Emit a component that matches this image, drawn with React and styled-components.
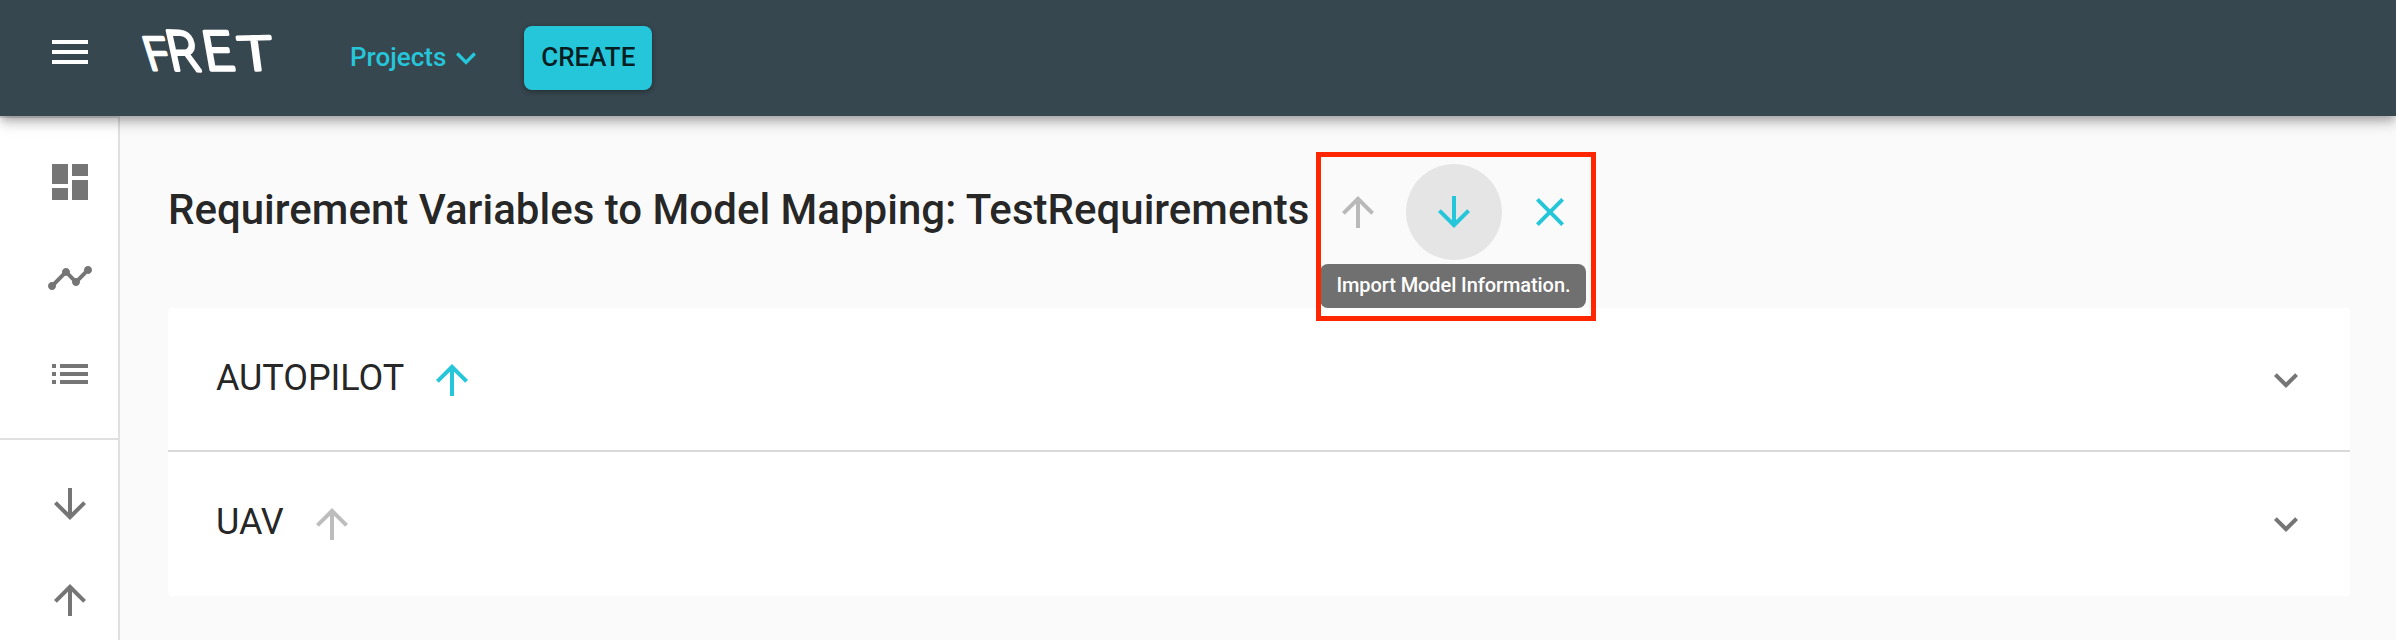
import React from 'react';
import styled, { createGlobalStyle } from 'styled-components';

const GlobalStyle = createGlobalStyle`
  *, *::before, *::after { box-sizing: border-box; }
  body {
    margin: 0;
    background: #fafafa;
    color: rgba(0, 0, 0, 0.87);
    font-family: Roboto, "Liberation Sans", sans-serif;
    overflow: hidden;
  }
`;

const colors = {
  bar: '#37474f',
  accent: '#26c6da',
  icon: '#757575',
  disabled: 'rgba(0, 0, 0, 0.26)',
  divider: '#e0e0e0',
};

const paths = {
  menu: 'M3 18h18v-2H3v2zm0-5h18v-2H3v2zm0-7v2h18V6H3z',
  dashboard: 'M3 13h8V3H3v10zm0 8h8v-6H3v6zm10 0h8V11h-8v10zm0-18v6h8V3h-8z',
  timeline:
    'M23 8c0 1.1-.9 2-2 2-.18 0-.35-.02-.51-.07l-3.56 3.55c.05.16.07.34.07.52 0 1.1-.9 2-2 2s-2-.9-2-2c0-.18.02-.36.07-.52l-2.55-2.55c-.16.05-.34.07-.52.07s-.36-.02-.52-.07l-4.55 4.56c.05.16.07.33.07.51 0 1.1-.9 2-2 2s-2-.9-2-2 .9-2 2-2c.18 0 .35.02.51.07l4.56-4.55C8.02 9.36 8 9.18 8 9c0-1.1.9-2 2-2s2 .9 2 2c0 .18-.02.36-.07.52l2.55 2.55c.16-.05.34-.07.52-.07s.36.02.52.07l3.55-3.56C19.02 8.35 19 8.18 19 8c0-1.1.9-2 2-2s2 .9 2 2z',
  list: 'M3 13h2v-2H3v2zm0 4h2v-2H3v2zm0-8h2V7H3v2zm4 4h14v-2H7v2zm0 4h14v-2H7v2zM7 7v2h14V7H7z',
  down: 'M20 12l-1.41-1.41L13 16.17V4h-2v12.17l-5.58-5.59L4 12l8 8 8-8z',
  up: 'M4 12l1.41 1.41L11 7.83V20h2V7.83l5.58 5.59L20 12l-8-8-8 8z',
  close: 'M19 6.41L17.59 5 12 10.59 6.41 5 5 6.41 10.59 12 5 17.59 6.41 19 12 13.41 17.59 19 19 17.59 13.41 12z',
  expand: 'M16.59 8.59L12 13.17 7.41 8.59 6 10l6 6 6-6z',
};

const Svg = styled.svg`
  display: block;
  flex: none;
  fill: currentColor;
  width: ${(p) => p.$size}px;
  height: ${(p) => p.$size}px;
`;

const Icon = ({ name, size = 48 }) => (
  <Svg viewBox="0 0 24 24" $size={size} aria-hidden="true">
    <path d={paths[name]} />
  </Svg>
);

const Page = styled.div`
  display: flex;
  flex-direction: column;
  height: 640px;
`;

const AppBar = styled.header`
  position: relative;
  z-index: 2;
  flex: none;
  display: flex;
  align-items: center;
  height: 116px;
  padding-left: 46px;
  background: ${colors.bar};
  box-shadow: 0 4px 8px -2px rgba(0, 0, 0, 0.2), 0 8px 10px 0 rgba(0, 0, 0, 0.14),
    0 2px 20px 0 rgba(0, 0, 0, 0.12);
`;

const MenuButton = styled.button`
  padding: 0 0 12px;
  border: 0;
  background: none;
  color: #fff;
`;

const Logo = styled.svg`
  width: 144px;
  height: 52px;
  margin: 0 72px 16px 40px;
  overflow: visible;
  fill: #fff;
  stroke: #fff;
  stroke-width: 3.2px;
  stroke-linejoin: round;
  font: 300 48px Roboto, sans-serif;
`;

const ProjectsButton = styled.button`
  display: flex;
  align-items: center;
  margin-right: 38px;
  padding: 0;
  border: 0;
  background: none;
  color: ${colors.accent};
  font: 500 26px/48px Roboto, sans-serif;
`;

const ButtonText = styled.span`
  padding-bottom: 2px;
`;

const CreateButton = styled.button`
  display: flex;
  align-items: center;
  justify-content: center;
  width: 128px;
  height: 64px;
  padding: 0;
  border: 0;
  border-radius: 8px;
  background: ${colors.accent};
  color: rgba(0, 0, 0, 0.87);
  font: 500 26px/48px Roboto, sans-serif;
  box-shadow: 0 2px 4px rgba(0, 0, 0, 0.22), 0 1px 6px rgba(0, 0, 0, 0.18);
`;

const Body = styled.div`
  flex: 1;
  display: flex;
  min-height: 0;
`;

const Sidebar = styled.nav`
  flex: none;
  width: 120px;
  border-right: 2px solid ${colors.divider};
  background: #fff;
  color: ${colors.icon};
  overflow: hidden;
`;

const NavGroup = styled.div`
  padding: 16px 0;
  border-top: 2px solid ${colors.divider};
`;

const NavItem = styled.div`
  display: flex;
  align-items: center;
  height: 96px;
  padding-left: 46px;
`;

const Main = styled.main`
  flex: 1;
  min-width: 0;
  padding: 48px 46px 0 48px;
`;

const TitleRow = styled.div`
  display: flex;
  align-items: center;
  height: 96px;
  margin-bottom: 48px;
`;

const Title = styled.h1`
  width: 1142px;
  margin: 0;
  padding-bottom: 5px;
  font-size: 42px;
  font-weight: 500;
  line-height: 64px;
  letter-spacing: 0.015px;
  white-space: nowrap;
`;

const Actions = styled.div`
  position: relative;
  display: flex;
`;

const IconButton = styled.button`
  display: flex;
  align-items: center;
  justify-content: center;
  width: 96px;
  height: 96px;
  padding: 0;
  border: 0;
  border-radius: 50%;
  background: ${(p) => (p.$hovered ? '#e5e5e5' : 'transparent')};
  color: ${(p) => (p.$muted ? colors.disabled : colors.accent)};
`;

const Highlight = styled.div`
  position: absolute;
  z-index: 1;
  top: -12px;
  left: 5.5px;
  width: 280px;
  height: 169px;
  border: 5px solid #ff2600;
`;

const Tooltip = styled.div`
  position: absolute;
  top: 100px;
  left: 10.4px;
  width: 266px;
  height: 44px;
  padding-left: 16px;
  border-radius: 8px;
  background: #707070;
  color: #fff;
  font-size: 20px;
  font-weight: 500;
  line-height: 42px;
  letter-spacing: -0.08px;
  white-space: nowrap;
`;

const Panels = styled.section`
  border-radius: 4px;
  background: #fff;
`;

const Panel = styled.div`
  display: flex;
  align-items: center;
  height: 144px;
  padding: 0 40px 0 48px;
  box-shadow: ${(p) => (p.$divided ? 'inset 0 -2px #d9d9d9' : 'none')};
`;

const PanelName = styled.span`
  padding-bottom: 4px;
  font-size: 36px;
  line-height: 54px;
  letter-spacing: -0.08px;
`;

const PanelToggle = styled.span`
  margin-left: auto;
  color: ${colors.icon};
`;

const components = [
  { name: 'AUTOPILOT', ready: true },
  { name: 'UAV', ready: false },
];

export default function App() {
  return (
    <Page>
      <GlobalStyle />
      <AppBar>
        <MenuButton aria-label="Menu">
          <Icon name="menu" />
        </MenuButton>
        <Logo viewBox="134 24 144 52" role="img" aria-label="FRET">
          <text transform="matrix(.92 0 .3 .96 149.8 70)">F</text>
          <text transform="matrix(1.02 .03 .25 1.15 171.6 70)">R</text>
          <text transform="matrix(1.08 0 .2 1.13 206.5 70)">E</text>
          <text transform="matrix(1.22 -.03 .13 .98 240.5 70.5)">T</text>
        </Logo>
        <ProjectsButton>
          <ButtonText>Projects</ButtonText>
          <Icon name="expand" size={40} />
        </ProjectsButton>
        <CreateButton>
          <ButtonText>CREATE</ButtonText>
        </CreateButton>
      </AppBar>
      <Body>
        <Sidebar>
          <NavGroup>
            <NavItem><Icon name="dashboard" /></NavItem>
            <NavItem><Icon name="timeline" /></NavItem>
            <NavItem><Icon name="list" /></NavItem>
          </NavGroup>
          <NavGroup>
            <NavItem><Icon name="down" /></NavItem>
            <NavItem><Icon name="up" /></NavItem>
          </NavGroup>
        </Sidebar>
        <Main>
          <TitleRow>
            <Title>Requirement Variables to Model Mapping: TestRequirements</Title>
            <Actions>
              <IconButton $muted aria-label="Export"><Icon name="up" /></IconButton>
              <IconButton $hovered aria-label="Import"><Icon name="down" /></IconButton>
              <IconButton aria-label="Close"><Icon name="close" /></IconButton>
              <Tooltip role="tooltip">Import Model Information.</Tooltip>
              <Highlight />
            </Actions>
          </TitleRow>
          <Panels>
            {components.map(({ name, ready }, i) => (
              <Panel key={name} $divided={i < components.length - 1}>
                <PanelName>{name}</PanelName>
                <IconButton $muted={!ready} aria-label="Export">
                  <Icon name="up" />
                </IconButton>
                <PanelToggle><Icon name="expand" /></PanelToggle>
              </Panel>
            ))}
          </Panels>
        </Main>
      </Body>
    </Page>
  );
}
